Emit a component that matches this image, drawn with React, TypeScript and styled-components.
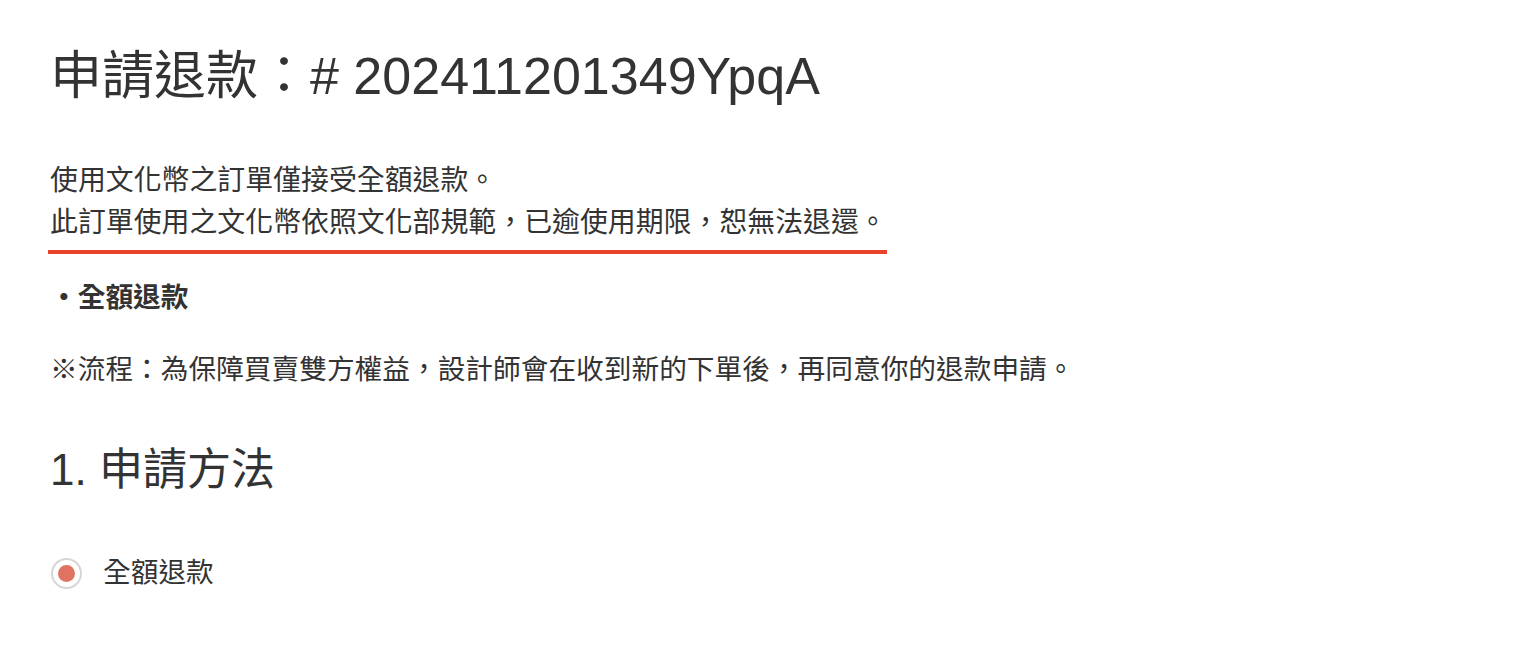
import React from 'react';
import styled, { createGlobalStyle } from 'styled-components';

const GlobalStyle = createGlobalStyle`
  html, body {
    margin: 0;
    padding: 0;
    background: #ffffff;
  }
  body {
    font-family: "Liberation Sans", "Noto Sans CJK TC", sans-serif;
    color: #333333;
  }
`;

const Page = styled.div`
  padding: 37px 48px;
  display: flex;
  flex-direction: column;
  align-items: flex-start;
`;

const Title = styled.h1`
  margin: 0;
  padding-left: 2px;
  font-size: 52px;
  line-height: 78px;
  font-weight: 400;
  color: #333333;
`;

const Notice = styled.div`
  margin-top: 45px;
  font-size: 27.9px;
  line-height: 42px;
  display: flex;
  flex-direction: column;
  align-items: flex-start;
`;

const Line = styled.span`
  padding-left: 2px;
`;

const Highlight = styled.span`
  display: inline-block;
  padding-left: 2px;
  padding-bottom: 6px;
  border-bottom: 4px solid #e8432b;
`;

const Bullet = styled.div`
  margin-top: 23px;
  padding-left: 2px;
  font-size: 27.7px;
  line-height: 42px;
  font-weight: 700;
`;

const Note = styled.p`
  margin: 30px 0 0;
  padding-left: 2px;
  font-size: 27.7px;
  line-height: 42px;
`;

const SectionTitle = styled.h2`
  margin: 47px 0 0;
  padding-left: 2px;
  font-size: 44px;
  line-height: 63px;
  font-weight: 400;
`;

const Option = styled.label`
  margin-top: 51px;
  display: flex;
  align-items: center;
  gap: 21px;
  font-size: 27.7px;
  line-height: 42px;
  cursor: pointer;
`;

const RadioRing = styled.span`
  box-sizing: border-box;
  width: 31px;
  height: 31px;
  margin-left: 3px;
  border-radius: 50%;
  border: 2px solid #d6d6d6;
  display: flex;
  align-items: center;
  justify-content: center;
`;

const RadioDot = styled.span<{ $checked: boolean }>`
  width: 17px;
  height: 17px;
  border-radius: 50%;
  background: ${(p) => (p.$checked ? '#e07262' : 'transparent')};
`;

export default function App() {
  return (
    <>
      <GlobalStyle />
      <Page>
        <Title>申請退款：# 202411201349YpqA</Title>
        <Notice>
          <Line>使用文化幣之訂單僅接受全額退款。</Line>
          <Highlight>此訂單使用之文化幣依照文化部規範，已逾使用期限，恕無法退還。</Highlight>
        </Notice>
        <Bullet>・全額退款</Bullet>
        <Note>※流程：為保障買賣雙方權益，設計師會在收到新的下單後，再同意你的退款申請。</Note>
        <SectionTitle>1. 申請方法</SectionTitle>
        <Option>
          <RadioRing>
            <RadioDot $checked />
          </RadioRing>
          全額退款
        </Option>
      </Page>
    </>
  );
}
